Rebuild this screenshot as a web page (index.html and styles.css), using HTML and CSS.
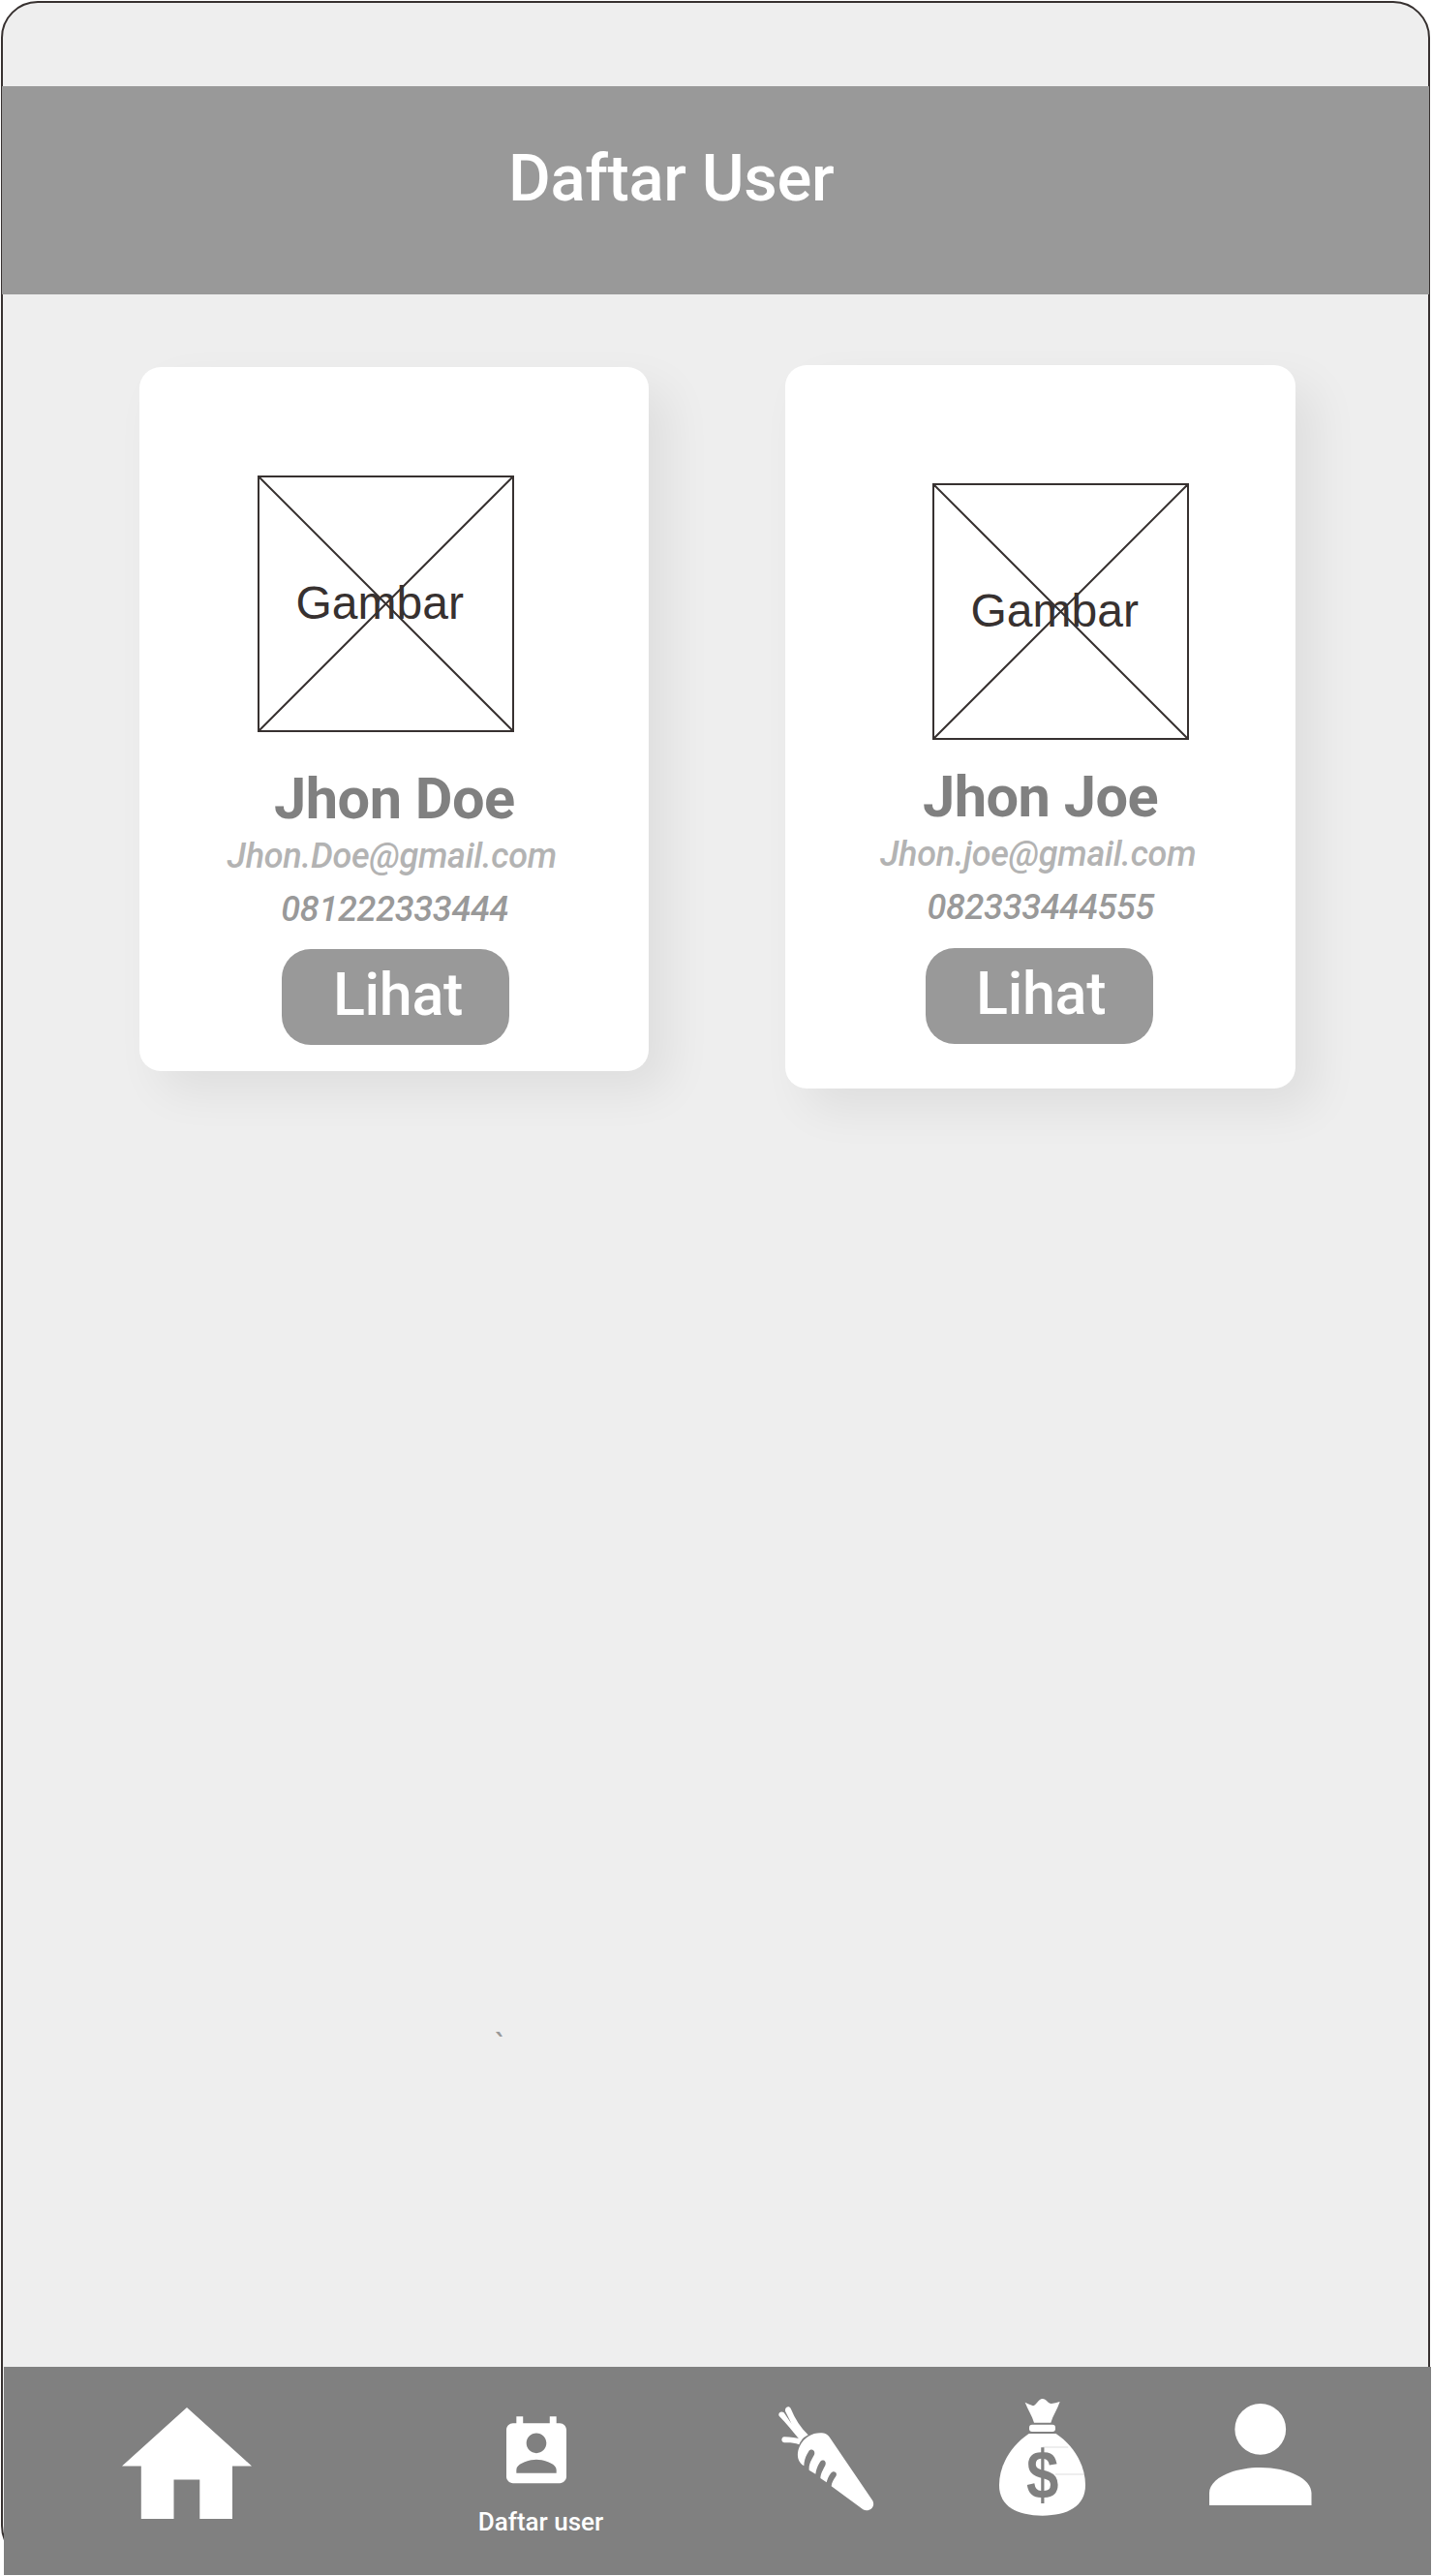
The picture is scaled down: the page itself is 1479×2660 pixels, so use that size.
FILE: index.html
```html
<!DOCTYPE html>
<html lang="id">
<head>
<meta charset="utf-8">
<title>Daftar User</title>
<link rel="stylesheet" href="styles.css">
</head>
<body>
<div class="screen">
  <header class="header"><h1 class="title">Daftar User</h1></header>

  <main class="content">
    <div class="cards">
      <article class="card card-doe">
        <svg class="photo" viewBox="0 0 265 265" width="265" height="265">
          <path d="M1 1H264V264H1ZM1 1L264 264M264 1L1 264"/>
          <text x="39.5" y="148">Gambar</text>
        </svg>
        <h2 class="name">Jhon Doe</h2>
        <p class="email">Jhon.Doe@gmail.com</p>
        <p class="phone">081222333444</p>
        <button class="view">Lihat</button>
      </article>
      <article class="card card-joe">
        <svg class="photo" viewBox="0 0 265 265" width="265" height="265">
          <path d="M1 1H264V264H1ZM1 1L264 264M264 1L1 264"/>
          <text x="39.5" y="148">Gambar</text>
        </svg>
        <h2 class="name">Jhon Joe</h2>
        <p class="email">Jhon.joe@gmail.com</p>
        <p class="phone">082333444555</p>
        <button class="view">Lihat</button>
      </article>
    </div>
    <p class="mark">`</p>
  </main>

  <nav class="nav">
    <svg class="nav-home" viewBox="0 0 134 115" width="134" height="115">
      <path d="M67 0L134 60.5H114V115H80.3V74.5H53.5V115H19.8V60.5H0Z"/>
    </svg>
    <div class="nav-users">
      <svg viewBox="3 1 18 20" width="62" height="69.5">
        <path d="M19 3h-1V1h-2v2H8V1H6v2H5c-1.11 0-2 .9-2 2v14c0 1.1.89 2 2 2h14c1.1 0 2-.9 2-2V5c0-1.1-.9-2-2-2zm-7 3c1.66 0 3 1.34 3 3s-1.34 3-3 3-3-1.34-3-3 1.34-3 3-3zm6 12H6v-1c0-2 4-3.1 6-3.1s6 1.1 6 3.1v1z"/>
      </svg>
      <span class="nav-label">Daftar user</span>
    </div>
    <svg class="nav-carrot" viewBox="74 74 297 324" width="99" height="108">
      <path d="M139 176C118 150 98 125 76 103C71 93 83 86 91 93L115 128L95 88C93 76 107 70 112 80C125 112 143 140 166 162Q152 169 144 179ZM138 192C123 186 108 185 92 186C81 184 82 169 92 168C111 168 130 170 147 177Q141 184 138 192Z"/>
      <path d="M153 258C130 245 130 217 140 197C153 170 178 156 204 156C218 156 226 160 233 170L366 366C376 386 354 402 336 393L238 321C239 308 246 299 252 290C259 277 243 270 236 281C228 291 226 300 223 309L204 296C205 279 213 269 219 256C225 240 208 236 202 247C194 259 191 270 189 283L169 271C167 251 178 237 185 223C190 209 174 202 167 214C158 228 153 243 153 258Z"/>
    </svg>
    <svg class="nav-money" viewBox="756 52 267 363" width="89" height="121">
      <path d="M864 126C858 105 845 85 836 63Q846 68 861 74C872 71 878 52 890 52C902 52 908 68 918 67Q930 65 944 61C937 84 922 104 916 126Z"/>
      <rect x="849" y="132" width="81" height="22" rx="9"/>
      <path d="M848 160H932C988 198 1023 258 1023 320C1023 385 968 414 890 414C812 414 756 386 756 320C756 258 792 198 848 160Z"/>
      <path class="crease" d="M890 202H970M930 286H1020"/>
      <text transform="translate(890 360) scale(.92 1.08)" text-anchor="middle">$</text>
    </svg>
    <svg class="nav-account" viewBox="4 4 16 16" width="105.5" height="105.5">
      <path d="M12 4a4 4 0 1 1 0 8 4 4 0 0 1 0-8zM12 14c4.42 0 8 1.79 8 4v2H4v-2c0-2.21 3.58-4 8-4z"/>
    </svg>
  </nav>
</div>
</body>
</html>
```
FILE: styles.css
```css
* {
  box-sizing: border-box;
}

body {
  margin: 0;
  padding: 1px;
  height: 2660px;
  background: #fff;
  font-family: Roboto, sans-serif;
  font-weight: 500;
}

h1, h2, p {
  margin: 0;
  white-space: nowrap;
}

.screen {
  display: flex;
  flex-direction: column;
  width: 1476px;
  height: 2645px;
  padding-top: 86px;
  border: 2px solid #373130;
  border-radius: 38px;
  background: #eee;
}

.header {
  flex: none;
  height: 215px;
  margin: 0 -1px;
  padding: 60px 0 0 523px;
  background: #999;
}

.title {
  color: #fff;
  font-size: 67px;
  font-weight: 500;
  letter-spacing: -0.35px;
  line-height: 70px;
}

.content {
  flex: none;
  height: 2140px;
}

.cards {
  display: flex;
  align-items: flex-start;
  gap: 141px;
  height: 820px;
  padding: 73px 0 0 141px;
}

.card {
  display: flex;
  flex-direction: column;
  align-items: flex-start;
  width: 526.4px;
  border-radius: 22px;
  background: #fff;
  box-shadow: 21px 21px 48px rgba(0, 0, 0, 0.068);
}

.card-doe {
  height: 727px;
  margin-top: 2px;
  padding-top: 111.7px;
}

.card-joe {
  height: 746.5px;
  padding-top: 122px;
}

.photo {
  flex: none;
  margin-left: 122.3px;
}

.card-joe .photo {
  margin-left: 151.6px;
}

.photo path {
  fill: none;
  stroke: #373130;
  stroke-width: 2;
}

.photo text {
  fill: #373130;
  font: 400 48px "Liberation Sans", sans-serif;
}

.name {
  margin: 34.3px 0 0 139px;
  color: #808080;
  font-size: 59.5px;
  font-weight: 700;
  letter-spacing: -0.5px;
  line-height: 70px;
}

.email,
.phone {
  font-size: 36px;
  font-style: italic;
  letter-spacing: -0.28px;
  line-height: 44px;
}

.email {
  margin: 1.7px 0 0 90.6px;
  color: #b3b3b3;
}

.phone {
  margin: 11.7px 0 0 146.3px;
  color: #999;
}

.card-joe .name {
  margin: 24.4px 0 0 141.5px;
}

.card-joe .email {
  margin: 1.3px 0 0 97.6px;
}

.card-joe .phone {
  margin: 11.3px 0 0 146px;
}

.view {
  width: 235px;
  height: 98.7px;
  margin: 18.6px 0 0 147.4px;
  padding: 0 0 5px 52.5px;
  border: 0;
  border-radius: 30px;
  background: #999;
  color: #fff;
  font: 500 61px/70px Roboto, sans-serif;
  letter-spacing: -0.3px;
  text-align: left;
}

.card-joe .view {
  margin: 20px 0 0 144.2px;
}

.mark {
  margin: 965px 0 0 508px;
  color: #999;
  font-size: 34px;
  font-weight: 400;
  line-height: 44px;
}

.nav {
  flex: none;
  display: flex;
  align-items: flex-start;
  width: 1474px;
  height: 215px;
  margin-left: 1px;
  background: #808080;
}

.nav svg {
  flex: none;
  fill: #fff;
}

.nav-home {
  margin: 42px 0 0 121.5px;
}

.nav-users {
  display: flex;
  flex-direction: column;
  align-items: center;
  width: 140px;
  margin: 51px 0 0 229px;
}

.nav-users svg {
  margin-right: 9px;
}

.nav-label {
  margin-top: 24px;
  color: #fff;
  font-size: 26px;
  line-height: 30px;
  white-space: nowrap;
}

.nav-carrot {
  margin: 40.7px 0 0 175.5px;
}

.nav-money {
  margin: 33.3px 0 0 128.8px;
}

.nav-money text {
  fill: #808080;
  font: 700 196px "Liberation Sans", sans-serif;
}

.nav-money .crease {
  stroke: #ccc;
  stroke-width: 2;
}

.nav-account {
  margin: 37.8px 0 0 128.5px;
}
```
